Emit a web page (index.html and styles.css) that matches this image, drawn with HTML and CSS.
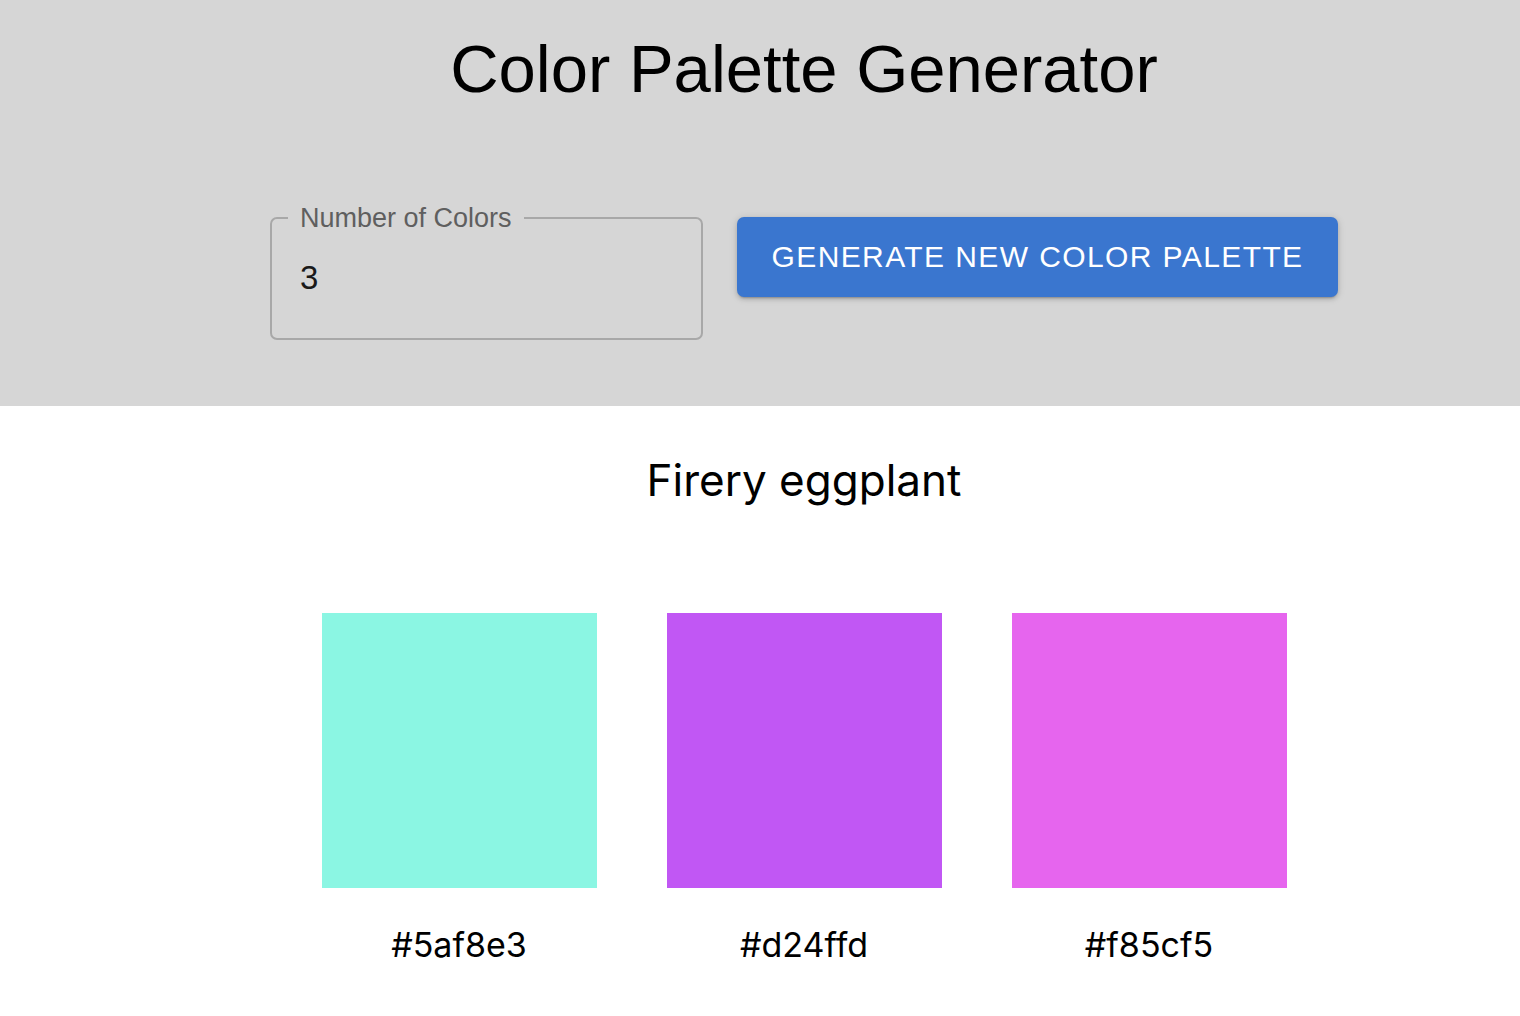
FILE: index.html
```html
<!DOCTYPE html>
<html lang="en">
<head>
<meta charset="utf-8">
<title>Color Palette Generator</title>
<link rel="stylesheet" href="styles.css">
</head>
<body>
<header class="top">
  <h1 class="title">Color Palette Generator</h1>
  <div class="controls">
    <fieldset class="field">
      <legend class="field-label">Number of Colors</legend>
      <input class="field-input" type="text" value="3">
    </fieldset>
    <button class="generate" type="button">Generate New Color Palette</button>
  </div>
</header>
<main class="palette">
  <h2 class="palette-name">Firery eggplant</h2>
  <div class="swatches">
    <div class="swatch">
      <div class="chip chip-1"></div>
      <div class="hex">#5af8e3</div>
    </div>
    <div class="swatch">
      <div class="chip chip-2"></div>
      <div class="hex">#d24ffd</div>
    </div>
    <div class="swatch">
      <div class="chip chip-3"></div>
      <div class="hex">#f85cf5</div>
    </div>
  </div>
</main>
</body>
</html>
```

FILE: styles.css
```css
html, body {
  margin: 0;
  padding: 0;
  background: #ffffff;
}

body {
  font-family: "Liberation Sans", Arial, sans-serif;
  color: #000;
  overflow: hidden;
}

.top {
  background: #d6d6d6;
  height: 406px;
  box-sizing: border-box;
  padding: 30px 0 0 88px;
  display: flex;
  flex-direction: column;
  align-items: center;
}

.title {
  margin: 0;
  font-family: "Liberation Sans", Arial, sans-serif;
  font-weight: 400;
  font-size: 67px;
  line-height: 77px;
  color: #000;
}

.controls {
  margin-top: 96px;
  display: flex;
  align-items: flex-start;
  gap: 34px;
}

.field {
  margin: 0;
  width: 433px;
  box-sizing: border-box;
  border: 2px solid #a8a8a8;
  border-radius: 7px;
  padding: 0 0 15px 16px;
  min-width: 0;
}

.field-label {
  padding: 0 12px;
  font-size: 27px;
  line-height: 30px;
  color: #5f5f5f;
}

.field-input {
  display: block;
  width: 380px;
  height: 90px;
  border: 0;
  outline: none;
  background: transparent;
  padding: 0 0 0 12px;
  margin: 0;
  font-family: "Liberation Sans", Arial, sans-serif;
  font-size: 33px;
  color: #1a1a1a;
}

.generate {
  margin-top: 14px;
  width: 601px;
  height: 80px;
  border: 0;
  border-radius: 7px;
  background: #3a76cf;
  color: #ffffff;
  font-family: "Liberation Sans", Arial, sans-serif;
  font-size: 30px;
  letter-spacing: 1.4px;
  text-transform: uppercase;
  box-shadow: 0 3px 2px -2px rgba(0,0,0,0.2), 0 2px 4px 0 rgba(0,0,0,0.14), 0 1px 9px 0 rgba(0,0,0,0.12);
  cursor: pointer;
}

.palette {
  padding: 0 0 0 88px;
  display: flex;
  flex-direction: column;
  align-items: center;
}

.palette-name {
  margin: 47px 0 0;
  font-family: "Inter", "Liberation Sans", sans-serif;
  font-weight: 400;
  font-size: 44px;
  line-height: 54px;
  color: #000;
}

.swatches {
  margin-top: 106px;
  display: flex;
  gap: 70px;
}

.swatch {
  display: flex;
  flex-direction: column;
  align-items: center;
}

.chip {
  width: 275px;
  height: 275px;
}

.chip-1 { background: #8bf6e3; }
.chip-2 { background: #c157f4; }
.chip-3 { background: #e665ee; }

.hex {
  margin-top: 36px;
  font-family: "Inter", "Liberation Sans", sans-serif;
  font-size: 34px;
  line-height: 42px;
  color: #000;
}
```
